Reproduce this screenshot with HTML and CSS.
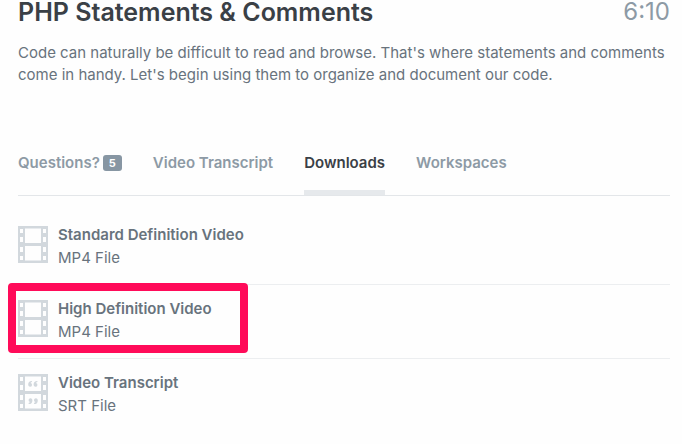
FILE: index.html
```html
<!DOCTYPE html>
<html lang="en">
<head>
    <meta charset="UTF-8">
    <meta name="viewport" content="width=device-width, initial-scale=1.0">
    <title>PHP Statements &amp; Comments</title>
    <link rel="stylesheet" href="styles.css">
</head>
<body>
    <!-- shared icon shapes -->
    <svg class="sprite" aria-hidden="true">
        <symbol id="film" viewBox="0 0 30 37">
            <path fill-rule="evenodd" d="M0 0H30V37H0Z
                M7 2.500H23V17H7Z M7 20H23V34.500H7Z
                M2 3H5V7H2Z M2 11H5V16H2Z M2 21H5V26H2Z M2 30H5V34H2Z
                M25 3H28V7H25Z M25 11H28V16H25Z M25 21H28V26H25Z M25 30H28V34H25Z"/>
        </symbol>
        <symbol id="quote" viewBox="0 0 8 5">
            <path d="M3 0C1 0 0 1 0 3A1.6 1.6 0 1 0 2 1.6Q2.200 1 3.300 .8Z M7.500 0C5.500 0 4.500 1 4.500 3A1.600 1.600 0 1 0 6.500 1.600Q6.700 1 7.800 .8Z"/>
        </symbol>
    </svg>

    <main class="video">
        <header class="video-header">
            <h1>PHP Statements &amp; Comments</h1>
            <span class="duration">6:10</span>
        </header>
        <p class="description">Code can naturally be difficult to read and browse. That's where statements and comments come in handy. Let's begin using them to organize and document our code.</p>

        <nav class="tabs">
            <a href="#questions">Questions? <span class="badge">5</span></a>
            <a href="#transcript">Video Transcript</a>
            <a href="#downloads" class="active">Downloads</a>
            <a href="#workspaces">Workspaces</a>
        </nav>

        <ul class="downloads" id="downloads">
            <li>
                <a href="#sd">
                    <svg class="icon" viewBox="0 0 30 37" aria-hidden="true"><use href="#film"/></svg>
                    <span class="file"><strong>Standard Definition Video</strong><span>MP4 File</span></span>
                </a>
            </li>
            <li class="highlight">
                <a href="#hd">
                    <svg class="icon" viewBox="0 0 30 37" aria-hidden="true"><use href="#film"/></svg>
                    <span class="file"><strong>High Definition Video</strong><span>MP4 File</span></span>
                </a>
            </li>
            <li>
                <a href="#srt">
                    <svg class="icon" viewBox="0 0 30 37" aria-hidden="true">
                        <use href="#film"/>
                        <use href="#quote" x="10" y="7" width="10" height="6"/>
                        <use href="#quote" x="10" y="24" width="10" height="6" transform="rotate(180 15 27)"/>
                    </svg>
                    <span class="file"><strong>Video Transcript</strong><span>SRT File</span></span>
                </a>
            </li>
        </ul>
    </main>
</body>
</html>
```
FILE: styles.css
```css
*, *::after{box-sizing: border-box;}
body{margin: 0; background-color: #fefefe; color: #68737d; font-family: Inter, "Open Sans", sans-serif; font-size: 15px; line-height: 23px;}
a{color: inherit; text-decoration: none;}
.sprite{display: none;}

.video{padding: 0 12px 0 18px;}
.video-header{display: flex; justify-content: space-between; align-items: center; height: 24px;}
h1{margin: 0; color: #3a4046; font-size: 25px; font-weight: 600; line-height: 24px;}
.duration{color: #8d9aa5; font-size: 24px; line-height: 24px;}
.description{margin: 18px 0 0; line-height: 22px;}

/* tabs */
.tabs{display: flex; gap: 31px; margin-top: 59px; border-bottom: 1px solid #e3e6e9;}
.tabs a{display: flex; align-items: center; padding: 6px 0 16px; border-bottom: 5px solid transparent; color: #8d9aa5; font-weight: 600;}
.tabs .active{border-color: #e6e9ec; color: #3a4046;}
.badge{margin-left: 3px; padding: 0 6px; border-radius: 3px; background-color: #8796a3; color: #fff; font-size: 11px; font-weight: 700; line-height: 16px;}

/* download list */
.downloads{margin: 15px 0 0; padding: 0; list-style: none;}
.downloads li{position: relative; border-bottom: 1px solid #eceef0;}
.downloads li:last-child{border-bottom: none;}
.downloads a{display: flex; gap: 10px; padding: 12px 0 15px;}
.icon{width: 30px; height: 37px; margin-top: 3px; fill: #d2d8dd;}
.file{display: flex; flex-direction: column;}
.file strong{font-weight: 600;}
.highlight::after{content: ""; position: absolute; top: -2px; left: -10px; width: 240px; height: 70px; border: 8px solid #ff0b59; border-radius: 4px; pointer-events: none;}
```
